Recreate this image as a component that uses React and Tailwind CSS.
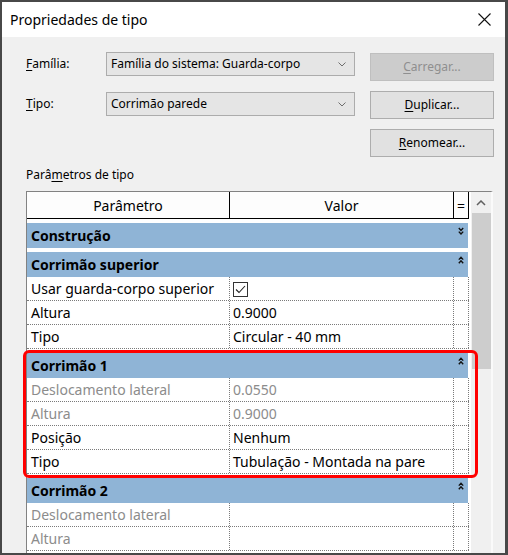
import React from 'react';

const sections = [
  { name: 'Construção', open: false, items: [] },
  {
    name: 'Corrimão superior',
    open: true,
    items: [
      { label: 'Usar guarda-corpo superior', checked: true },
      { label: 'Altura', value: '0.9000' },
      { label: 'Tipo', value: 'Circular - 40 mm' },
    ],
  },
  {
    name: 'Corrimão 1',
    open: true,
    items: [
      { label: 'Deslocamento lateral', value: '0.0550', muted: true },
      { label: 'Altura', value: '0.9000', muted: true },
      { label: 'Posição', value: 'Nenhum' },
      { label: 'Tipo', value: 'Tubulação - Montada na pare' },
    ],
  },
  {
    name: 'Corrimão 2',
    open: true,
    items: [
      { label: 'Deslocamento lateral', value: '', muted: true },
      { label: 'Altura', value: '', muted: true },
    ],
  },
];

function DoubleChevron({ up }) {
  const d = up
    ? 'M0.8 3.6 L3 1.2 L5.2 3.6 M0.8 7.2 L3 4.8 L5.2 7.2'
    : 'M0.8 1 L3 3.4 L5.2 1 M0.8 4.6 L3 7 L5.2 4.6';
  return (
    <svg width="6" height="8" viewBox="0 0 6 8">
      <path d={d} fill="none" stroke="#111" strokeWidth="1.4" />
    </svg>
  );
}

function SelectBox({ text }) {
  return (
    <div className="w-[249px] h-[24px] bg-[#e5e5e5] border border-[#acacac] flex items-center pl-[4px] pr-[8px]">
      <span className="flex-1 truncate">{text}</span>
      <svg width="8" height="5" viewBox="0 0 8 5">
        <path d="M0.5 0.5 L4 4 L7.5 0.5" fill="none" stroke="#6d6d6d" strokeWidth="1" />
      </svg>
    </div>
  );
}

function Button({ children, disabled }) {
  return (
    <div
      className={
        disabled
          ? 'w-[124px] h-[28px] bg-[#cccccc] border border-[#bfbfbf] text-[#8f8f8f] flex items-center justify-center'
          : 'w-[124px] h-[28px] bg-[#e1e1e1] border border-[#adadad] text-black flex items-center justify-center'
      }
    >
      {children}
    </div>
  );
}

function GroupRow({ name, open }) {
  return (
    <div className="h-[29px] pt-[4px] bg-white">
      <div className="w-[441px] h-[25px] bg-[#8fb4d6] flex">
        <div className="flex-1 pl-[4px] font-bold flex items-center">{name}</div>
        <div className="w-[14px] pt-[4px] flex justify-center">
          <DoubleChevron up={open} />
        </div>
      </div>
    </div>
  );
}

function ParamRow({ label, value, checked, muted }) {
  const tone = muted ? 'text-[#8c8c8c]' : 'text-black';
  return (
    <div className={`h-[24px] flex bg-white border-b border-dotted border-[#7a7a7a] ${tone}`}>
      <div className="w-[203px] pl-[4px] border-r border-dotted border-[#7a7a7a] flex items-center whitespace-nowrap overflow-hidden">
        {label}
      </div>
      <div className="w-[224px] pl-[3px] border-r border-dotted border-[#7a7a7a] flex items-center whitespace-nowrap overflow-hidden">
        {checked ? (
          <div className="w-[15px] h-[15px] mt-[2px] border border-[#333333] bg-white flex items-center justify-center">
            <svg width="13" height="13" viewBox="0 0 13 13">
              <path d="M2 6.5 L5 9.5 L11 3" fill="none" stroke="#222" strokeWidth="1.1" />
            </svg>
          </div>
        ) : (
          value
        )}
      </div>
      <div className="w-[15px] border-r border-dotted border-[#7a7a7a]" />
    </div>
  );
}

export default function App() {
  return (
    <div className="relative w-[508px] h-[555px] overflow-hidden bg-[#f0f0f0] border-l-2 border-t-2 border-r-[3px] border-b-2 border-[#484848] flex flex-col font-['Noto_Sans',sans-serif] text-black">
      {/* title bar */}
      <div className="h-[35px] shrink-0 bg-white flex items-center pl-[8px] pr-[14px]">
        <span className="flex-1 text-[14px]">Propriedades de tipo</span>
        <svg width="13" height="13" viewBox="0 0 13 13">
          <path d="M0.5 0.5 L12.5 12.5 M12.5 0.5 L0.5 12.5" stroke="#111" strokeWidth="1.1" />
        </svg>
      </div>

      <div className="flex-1 min-h-0 flex flex-col pl-[24px] pt-[15px] text-[12px]">
        {/* family / type selectors and actions */}
        <div className="flex gap-[15px]">
          <div className="flex flex-col gap-[16px]">
            <div className="flex items-center">
              <span className="w-[80px]">
                <span className="underline underline-offset-2">F</span>amília:
              </span>
              <SelectBox text="Família do sistema: Guarda-corpo" />
            </div>
            <div className="flex items-center">
              <span className="w-[80px]">
                <span className="underline underline-offset-2">T</span>ipo:
              </span>
              <SelectBox text="Corrimão parede" />
            </div>
          </div>
          <div className="flex flex-col gap-[10px] mt-[1px]">
            <Button disabled>
              <span className="underline underline-offset-2">C</span>arregar...
            </Button>
            <Button>
              <span className="underline underline-offset-2">D</span>uplicar...
            </Button>
            <Button>
              <span className="underline underline-offset-2">R</span>enomear...
            </Button>
          </div>
        </div>

        <div className="mt-[10px] leading-[16px]">
          Parâ<span className="underline underline-offset-2">m</span>etros de tipo
        </div>

        {/* parameter grid */}
        <div className="mt-[8px] w-[467px] flex-1 min-h-0 flex border-l border-t border-[#828282] border-r-2 border-r-[#fafafa] text-[14px] overflow-hidden">
          <div className="w-[442px] flex flex-col bg-white">
            <div className="h-[27px] shrink-0 flex bg-[#fdfdfd] border-b border-black">
              <div className="w-[203px] border-r border-black flex items-center justify-center">Parâmetro</div>
              <div className="w-[224px] border-r border-black flex items-center justify-center">Valor</div>
              <div className="w-[15px] border-r border-black flex items-center justify-center">=</div>
            </div>
            {sections.map((s) => (
              <div key={s.name}>
                <GroupRow name={s.name} open={s.open} />
                {s.items.map((it, i) => (
                  <ParamRow key={i} {...it} />
                ))}
              </div>
            ))}
          </div>
          <div className="w-[2px] bg-white" />
          {/* vertical scrollbar */}
          <div className="w-[20px] bg-[#f0f0f0] flex flex-col">
            <div className="h-[21px] flex items-center justify-center">
              <svg width="10" height="6" viewBox="0 0 10 6">
                <path d="M1 5 L5 1 L9 5" fill="none" stroke="#606060" strokeWidth="1.5" />
              </svg>
            </div>
            <div className="h-[156px] ml-[1px] bg-[#cdcdcd]" />
          </div>
        </div>
      </div>

      {/* highlight around the first handrail group */}
      <div className="absolute left-[21px] top-[348px] w-[455px] h-[128px] border-[3px] border-[#ff0000] rounded-[6px] pointer-events-none" />
    </div>
  );
}
